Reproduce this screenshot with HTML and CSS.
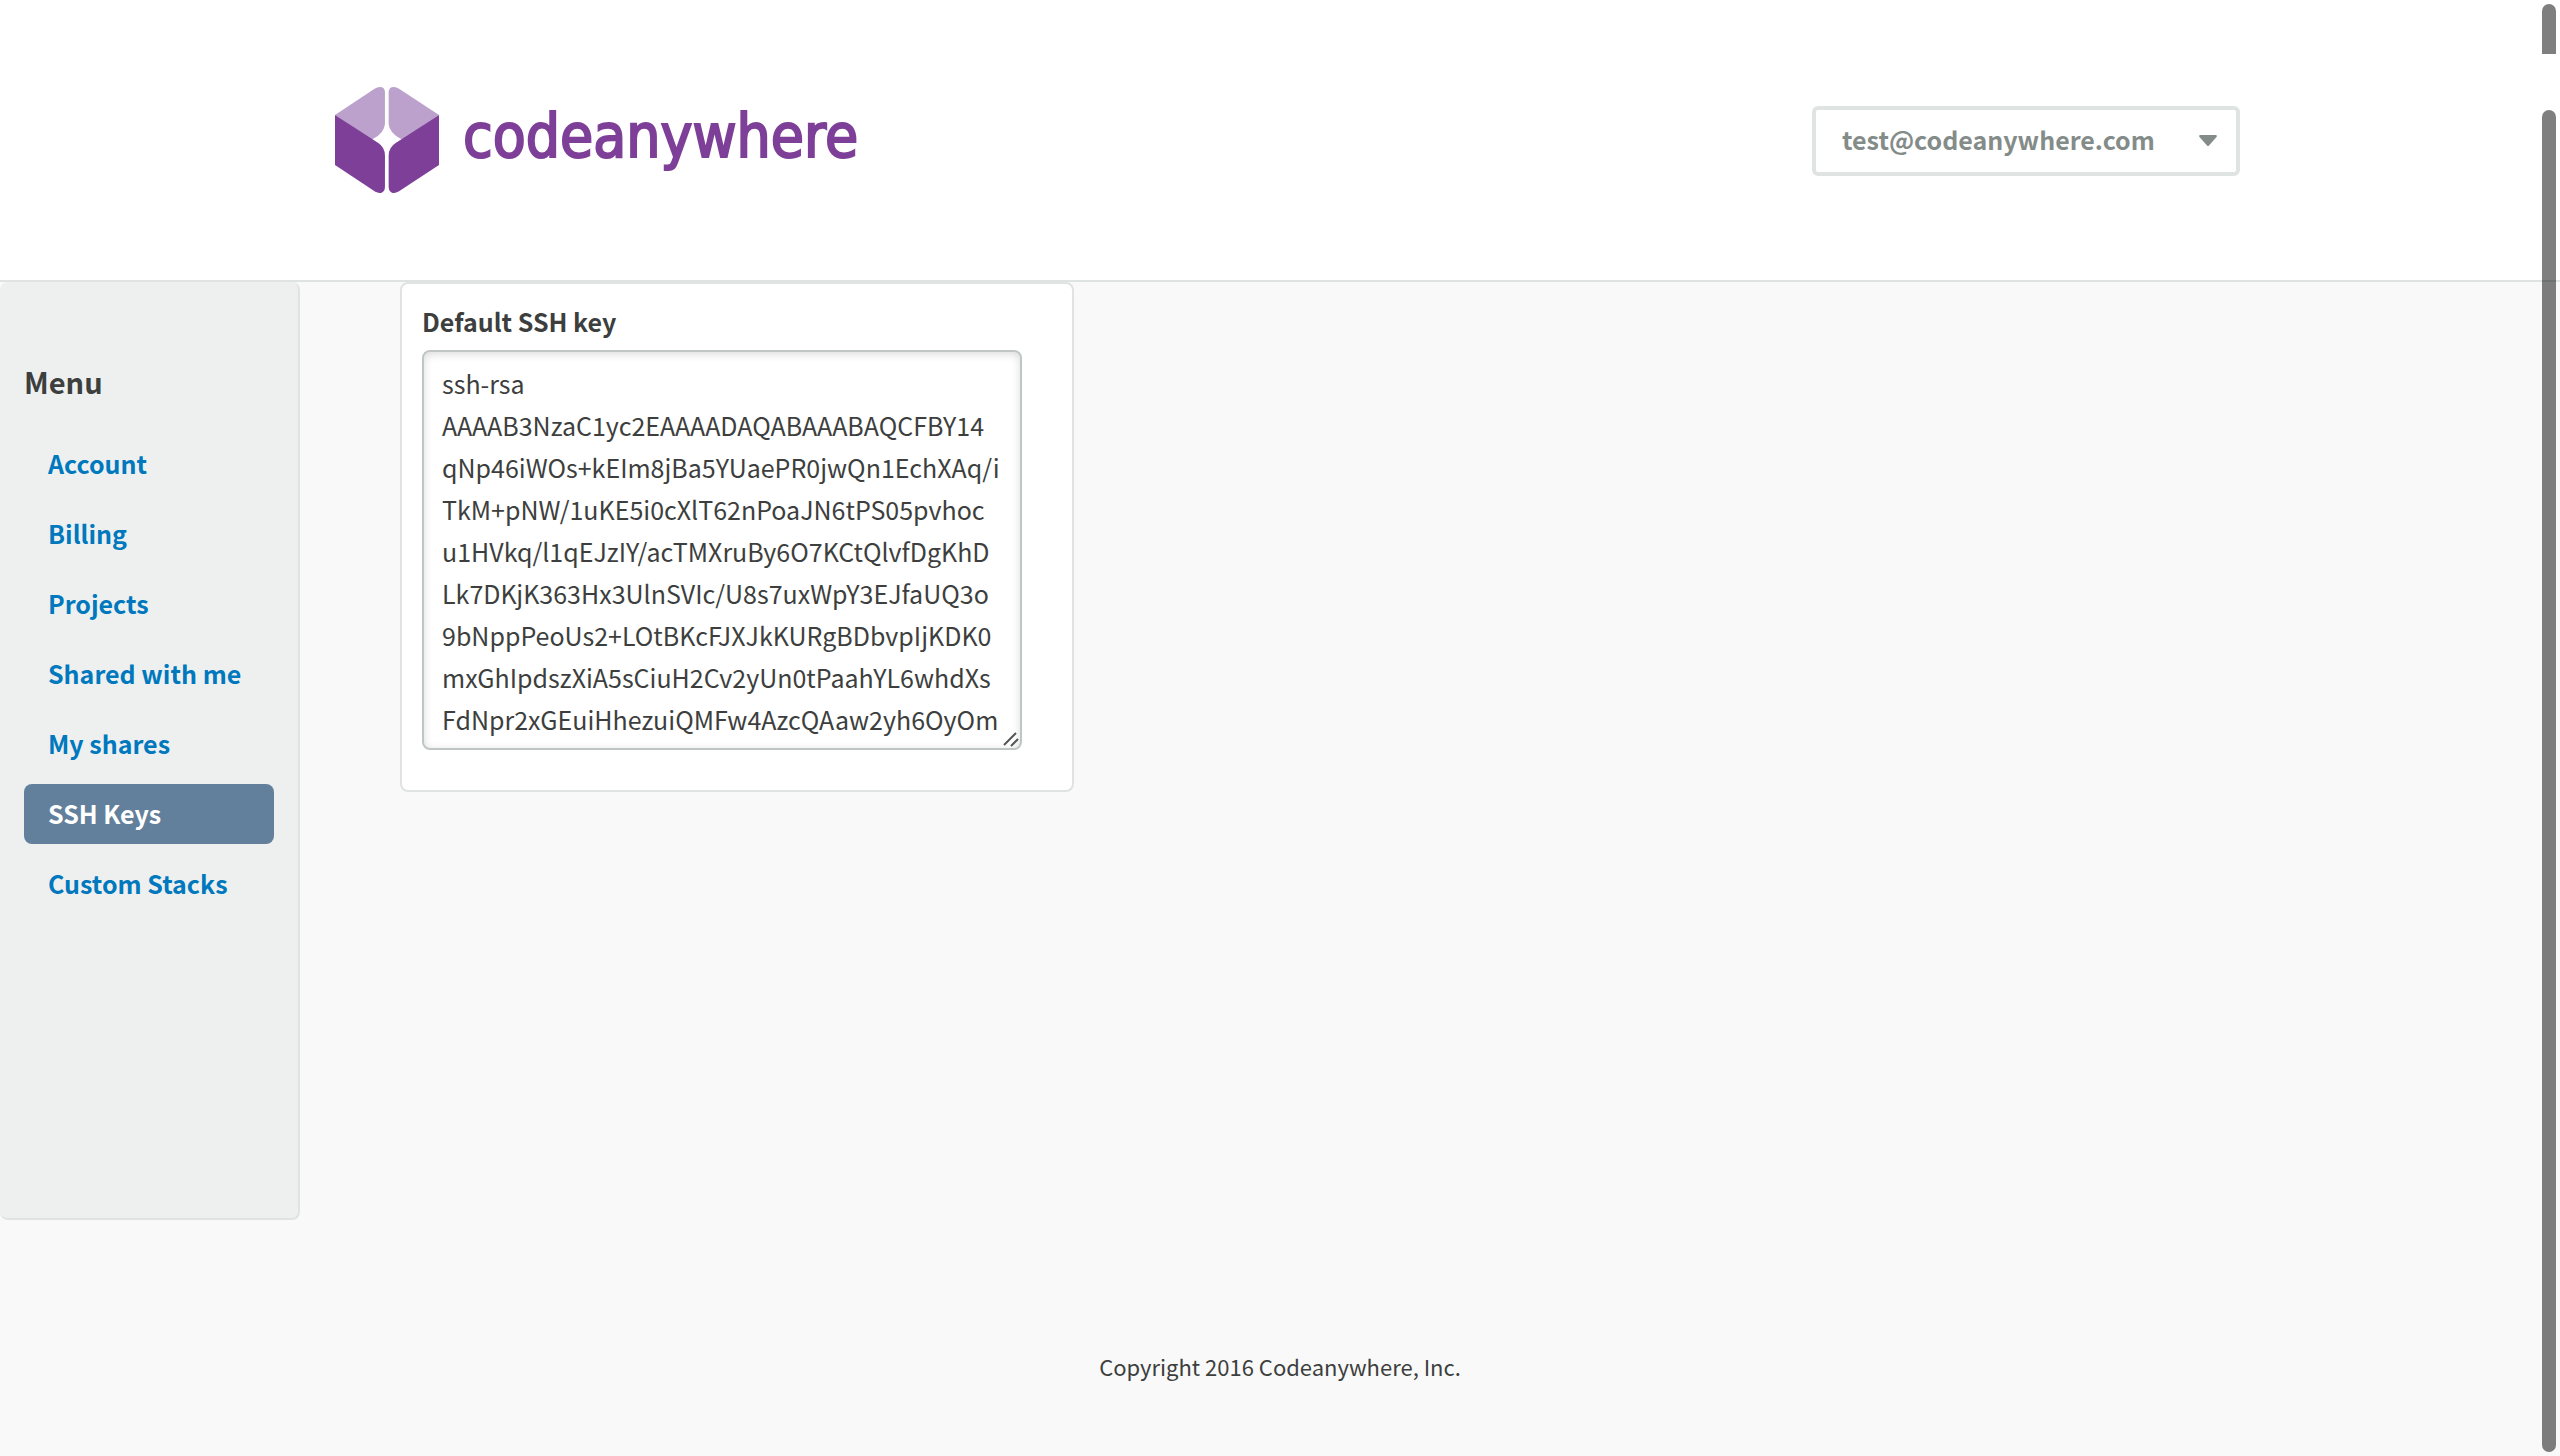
FILE: index.html
```html
<!DOCTYPE html>
<html lang="en">
<head>
<meta charset="utf-8">
<title>SSH Keys - Codeanywhere</title>
<meta name="viewport" content="width=device-width, initial-scale=1">
<link rel="stylesheet" href="styles.css">
</head>
<body>
<header class="header">
  <div class="header-inner">
    <a class="logo" href="#">
      <svg class="logo-mark" viewBox="69 81 281 318" preserveAspectRatio="none" aria-hidden="true">
        <path class="logo-light" d="M69 165 L176 86 Q186 79 196 82 Q204 86 204 98 V192 Q202 220 170 238 L160 234Z"/>
        <path class="logo-light" d="M350 165 L242 86 Q232 79 222 82 Q214 86 214 98 V192 Q216 220 249 238 L260 232Z"/>
        <path class="logo-dark" d="M69 165 L186 249 Q204 262 204 287 V380 Q204 393 195 398 Q187 401 176 394 L69 315Z"/>
        <path class="logo-dark" d="M350 165 L233 249 Q214 262 214 287 V380 Q214 393 223 398 Q231 401 242 394 L350 315Z"/>
      </svg>
      <span class="logo-text">codeanywhere</span>
    </a>
    <div class="user-menu">
      <select class="user-select" aria-label="User menu">
        <option>test@codeanywhere.com</option>
      </select>
      <svg class="user-caret" viewBox="0 0 18 11" aria-hidden="true"><path d="M1 0H17Q18.500 .5 17.500 2L10 10.500Q9 11.500 8 10.500L.5 2Q-.5 .5 1 0Z"/></svg>
    </div>
  </div>
</header>
<main class="content">
  <nav class="sidebar">
    <h2 class="sidebar-title">Menu</h2>
    <ul class="menu">
      <li><a class="menu-link" href="#">Account</a></li>
      <li><a class="menu-link" href="#">Billing</a></li>
      <li><a class="menu-link" href="#">Projects</a></li>
      <li><a class="menu-link" href="#">Shared with me</a></li>
      <li><a class="menu-link" href="#">My shares</a></li>
      <li><a class="menu-link active" href="#">SSH Keys</a></li>
      <li><a class="menu-link" href="#">Custom Stacks</a></li>
    </ul>
  </nav>
  <section class="card">
    <label class="field-label" for="ssh-key">Default SSH key</label>
    <div class="field">
      <textarea class="key" id="ssh-key" rows="9" spellcheck="false">ssh-rsa
AAAAB3NzaC1yc2EAAAADAQABAAABAQCFBY14
qNp46iWOs+kEIm8jBa5YUaePR0jwQn1EchXAq/i
TkM+pNW/1uKE5i0cXlT62nPoaJN6tPS05pvhoc
u1HVkq/l1qEJzIY/acTMXruBy6O7KCtQlvfDgKhD
Lk7DKjK363Hx3UlnSVIc/U8s7uxWpY3EJfaUQ3o
9bNppPeoUs2+LOtBKcFJXJkKURgBDbvpIjKDK0
mxGhIpdszXiA5sCiuH2Cv2yUn0tPaahYL6whdXs
FdNpr2xGEuiHhezuiQMFw4AzcQAaw2yh6OyOm</textarea>
      <svg class="grip" viewBox="0 0 16 16" aria-hidden="true"><path d="M1 14L13 2M8 15L15 8"/></svg>
    </div>
  </section>
</main>
<footer class="footer">Copyright 2016 Codeanywhere, Inc.</footer>
<div class="scroll-thumb scroll-outer"></div>
<div class="scroll-thumb scroll-inner"></div>
</body>
</html>
```
FILE: styles.css
```css
* {
  box-sizing: border-box;
}

body {
  margin: 0;
  min-height: 100vh;
  background: #f9f9f9;
  color: #3d3f3e;
  font-family: "Noto Sans CJK SC", "Noto Sans", sans-serif;
  font-size: 25px;
  line-height: 42px;
  overflow: hidden;
}

.header {
  background: #fff;
  border-bottom: 2px solid #dfe3e2;
}

.header-inner {
  max-width: 1920px;
  margin: 0 auto;
  padding: 87px 0;
  display: flex;
  justify-content: space-between;
  align-items: flex-start;
}

.logo {
  display: flex;
  gap: 24px;
  margin-left: 15px;
  color: #7e3f98;
  text-decoration: none;
}

.logo-mark {
  width: 104px;
  height: 106px;
}

.logo-light {
  fill: #bba1cc;
}

.logo-dark {
  fill: #7e3f98;
}

.logo-text {
  font-family: "DejaVu Sans Condensed", "DejaVu Sans", sans-serif;
  font-size: 60px;
  line-height: 98px;
  -webkit-text-stroke: 2px #7e3f98;
}

.user-menu {
  position: relative;
  width: 428px;
  margin-top: 19px;
}

.user-select {
  appearance: none;
  display: block;
  width: 100%;
  height: 70px;
  padding: 0 60px 4px 26px;
  border: 4px solid #dfe3e2;
  border-radius: 6px;
  background: #fff;
  color: #848c89;
  font: inherit;
  font-weight: 700;
}

.user-caret {
  position: absolute;
  right: 23px;
  top: 29px;
  width: 18px;
  height: 11px;
  fill: #848c89;
  pointer-events: none;
}

.content {
  display: flex;
  align-items: flex-start;
  gap: 100px;
}

.sidebar {
  width: 300px;
  min-height: 938px;
  padding: 78px 24px 24px;
  background: #eef0f0;
  border: solid #dfe3e2;
  border-width: 0 2px 2px 0;
  border-radius: 8px;
}

.sidebar-title {
  margin: 0 0 32px;
  font-size: 29px;
  font-weight: 700;
  line-height: 42px;
}

.menu {
  display: grid;
  gap: 10px;
  margin: 0;
  padding: 0;
  list-style: none;
}

.menu-link {
  display: block;
  padding: 8px 24px 10px;
  border-radius: 8px;
  color: #0078bd;
  font-weight: 700;
  text-decoration: none;
  white-space: nowrap;
}

.menu-link.active {
  background: #62809b;
  color: #fff;
}

.card {
  width: 674px;
  padding: 16px 20px 40px;
  background: #fff;
  border: 2px solid #dfe3e2;
  border-radius: 8px;
}

.field-label {
  display: block;
  margin-bottom: 8px;
  font-weight: 700;
}

.field {
  position: relative;
  width: 600px;
}

.key {
  display: block;
  width: 100%;
  height: 400px;
  padding: 10px 18px;
  border: 2px solid #bfc6c4;
  border-radius: 8px;
  background: #fff;
  box-shadow: inset 0 2px 8px rgba(0, 0, 0, .15);
  color: inherit;
  font: inherit;
  white-space: pre;
  overflow: hidden;
  resize: none;
}

.grip {
  position: absolute;
  right: 3px;
  bottom: 3px;
  width: 16px;
  height: 16px;
  fill: none;
  stroke: #555;
  stroke-width: 2;
}

.footer {
  padding: 125px 0 67px;
  font-size: 22px;
  text-align: center;
}

.scroll-thumb {
  position: fixed;
  right: 4px;
  width: 14px;
  background: rgba(0, 0, 0, .5);
}

.scroll-outer {
  top: 4px;
  height: 50px;
  border-radius: 7px 7px 0 0;
}

.scroll-inner {
  top: 110px;
  bottom: 4px;
  border-radius: 7px;
}
```
